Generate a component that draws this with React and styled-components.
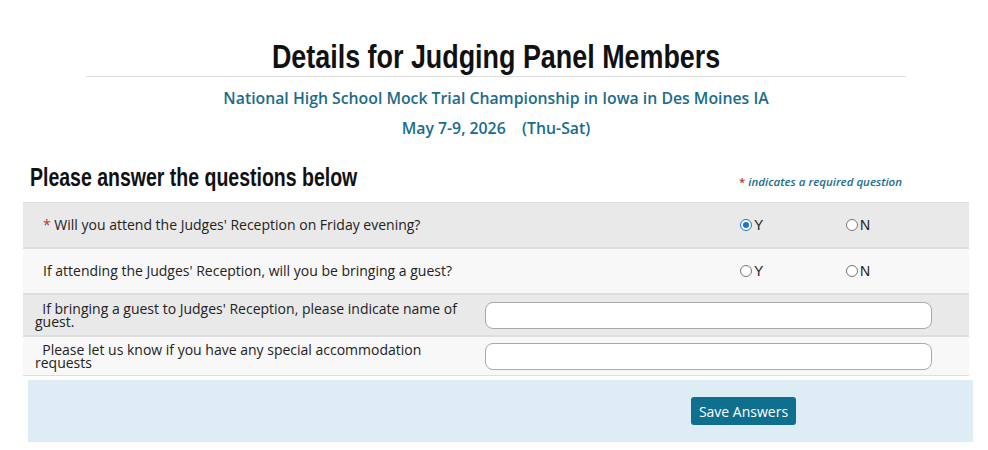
import React, { useState } from 'react';
import styled, { createGlobalStyle } from 'styled-components';

const GlobalStyle = createGlobalStyle`
  html, body {
    margin: 0;
    padding: 0;
    background: #fff;
  }
  body {
    font-family: 'Open Sans', 'Liberation Sans', sans-serif;
    color: #222;
  }
`;

const Page = styled.div`
  width: 946px;
  margin-left: 23px;
  padding-top: 37px;
`;

const Header = styled.header`
  display: flex;
  flex-direction: column;
  align-items: center;
`;

// narrow display face: squeeze a bold sans horizontally
const Narrow = styled.span`
  display: inline-block;
  font-family: 'Liberation Sans', Arial, sans-serif;
  font-weight: 700;
  transform: scaleX(${p => p.$sx});
  transform-origin: ${p => p.$origin || 'center'};
  white-space: nowrap;
`;

const Title = styled.h1`
  margin: 0;
  font-size: 33px;
  line-height: 38px;
  color: #111;
`;

const Rule = styled.hr`
  width: 820px;
  margin: 0 0 6px;
  border: 0;
  border-top: 1px solid #dcdcdc;
`;

const SubTitle = styled.div`
  font-size: 15.8px;
  font-weight: 600;
  color: #1b6c8a;
  line-height: 30px;
  white-space: pre;
`;

const IntroRow = styled.div`
  display: flex;
  justify-content: space-between;
  align-items: flex-end;
  padding: 18px 67px 10px 7px;
`;

const SectionTitle = styled.h2`
  margin: 0;
  font-size: 25px;
  line-height: 30px;
  color: #111;
`;

const Note = styled.span`
  font-size: 11.5px;
  font-style: italic;
  font-weight: 600;
  color: #1b6c8a;
  padding-bottom: 3px;
`;

const Star = styled.span`
  color: #b03a2e;
  font-style: normal;
`;

const Table = styled.div`
  display: flex;
  flex-direction: column;
  gap: 2px;
  background: #dedede;
  border-top: 1px solid #dedede;
  border-bottom: 1px solid #dedede;
`;

const Row = styled.div`
  display: grid;
  grid-template-columns: 462px 447px 1fr;
  align-items: center;
  min-height: ${p => p.$h}px;
  background: ${p => (p.$alt ? '#f8f8f8' : '#e9e9e9')};
`;

const Question = styled.div`
  font-size: 14px;
  line-height: ${p => (p.$tight ? '13px' : '18px')};
  padding: ${p => (p.$tight ? '0 8px 0 12px' : '0 0 0 20px')};
  color: #222;
`;

const RadioGroup = styled.div`
  grid-column: 2 / 4;
  display: flex;
  padding-left: 255px;
`;

const Option = styled.label`
  display: flex;
  align-items: center;
  width: 106px;
  font-family: 'Liberation Sans', Arial, sans-serif;
  font-size: 14px;
  color: #222;
`;

const Radio = styled.input.attrs({ type: 'radio' })`
  appearance: none;
  width: 12px;
  height: 12px;
  margin: 0 2px 0 0;
  border: 1px solid #777;
  border-radius: 50%;
  background: #fff;
  position: relative;

  &:checked {
    border-color: #1a73d9;
  }
  &:checked::after {
    content: '';
    position: absolute;
    inset: 2px;
    border-radius: 50%;
    background: #1a73d9;
  }
`;

const TextInput = styled.input.attrs({ type: 'text' })`
  box-sizing: border-box;
  width: 447px;
  height: 27px;
  border: 1px solid #a9a9a9;
  border-radius: 8px;
  background: #fff;
  font-family: 'Open Sans', sans-serif;
  font-size: 13px;
  padding: 0 8px;
`;

const Footer = styled.div`
  display: flex;
  justify-content: center;
  margin: 4px -4px 0 5px;
  padding: 17px 0 17px 486px;
  background: #deedf5;
`;

const SaveButton = styled.button`
  font-family: 'Open Sans', sans-serif;
  font-size: 14px;
  color: #fff;
  background: #0f6f8f;
  border: 0;
  border-radius: 3px;
  height: 28px;
  padding: 0 8px;
  cursor: pointer;
`;

const YesNo = ({ name, value, onChange }) => (
  <RadioGroup>
    <Option>
      <Radio name={name} checked={value === 'Y'} onChange={() => onChange('Y')} />Y
    </Option>
    <Option>
      <Radio name={name} checked={value === 'N'} onChange={() => onChange('N')} />N
    </Option>
  </RadioGroup>
);

export default function App() {
  const [attend, setAttend] = useState('Y');
  const [guest, setGuest] = useState('');
  const [guestName, setGuestName] = useState('');
  const [requests, setRequests] = useState('');

  return (
    <Page>
      <GlobalStyle />
      <Header>
        <Title><Narrow $sx={0.815}>Details for Judging Panel Members</Narrow></Title>
        <Rule />
        <SubTitle>National High School Mock Trial Championship in Iowa in Des Moines IA</SubTitle>
        <SubTitle>May 7-9, 2026    (Thu-Sat)</SubTitle>
      </Header>

      <IntroRow>
        <SectionTitle><Narrow $sx={0.78} $origin="left">Please answer the questions below</Narrow></SectionTitle>
        <Note><Star>*</Star> indicates a required question</Note>
      </IntroRow>

      <Table>
        <Row $h={44}>
          <Question><Star>*</Star> Will you attend the Judges' Reception on Friday evening?</Question>
          <YesNo name="attend" value={attend} onChange={setAttend} />
        </Row>
        <Row $h={44} $alt>
          <Question>If attending the Judges' Reception, will you be bringing a guest?</Question>
          <YesNo name="guest" value={guest} onChange={setGuest} />
        </Row>
        <Row $h={40}>
          <Question $tight>&nbsp;&nbsp;If bringing a guest to Judges' Reception, please indicate name of guest.</Question>
          <TextInput value={guestName} onChange={e => setGuestName(e.target.value)} />
        </Row>
        <Row $h={38} $alt>
          <Question $tight>&nbsp;&nbsp;Please let us know if you have any special accommodation requests</Question>
          <TextInput value={requests} onChange={e => setRequests(e.target.value)} />
        </Row>
      </Table>

      <Footer>
        <SaveButton>Save Answers</SaveButton>
      </Footer>
    </Page>
  );
}
